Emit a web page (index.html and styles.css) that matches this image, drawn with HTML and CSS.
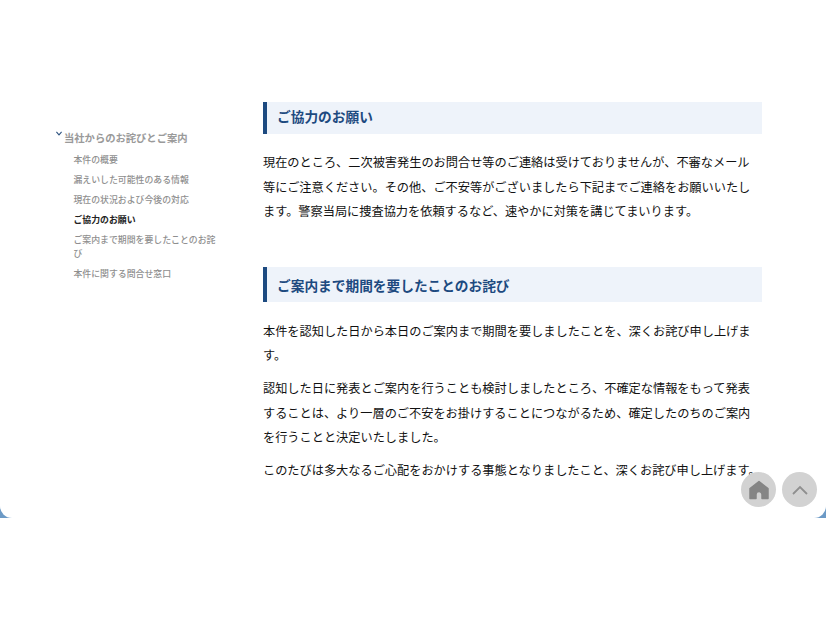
FILE: index.html
```html
<!DOCTYPE html>
<html lang="ja">
<head>
    <meta charset="UTF-8">
    <meta name="viewport" content="width=device-width, initial-scale=1.0">
    <title>当社からのお詫びとご案内</title>
    <link rel="stylesheet" href="styles.css">
</head>
<body>
    <div class="frame">
        <div class="sheet">
            <nav class="side">
                <div class="side-title">
                    <svg class="chevron" viewBox="0 0 6 5" width="6" height="5"><path d="M.4 .8L3 3.800 5.600 .8" fill="none" stroke="#2f5480" stroke-width="1.100"/></svg>
                    <span>当社からのお詫びとご案内</span>
                </div>
                <ul class="side-list">
                    <li>本件の概要</li>
                    <li>漏えいした可能性のある情報</li>
                    <li>現在の状況および今後の対応</li>
                    <li class="current">ご協力のお願い</li>
                    <li>ご案内まで期間を要したことのお詫び</li>
                    <li>本件に関する問合せ窓口</li>
                </ul>
            </nav>
            <main class="content">
                <section class="block">
                    <h2 class="block-title">ご協力のお願い</h2>
                    <p>現在のところ、二次被害発生のお問合せ等のご連絡は受けておりませんが、不審なメール等にご注意ください。その他、ご不安等がございましたら下記までご連絡をお願いいたします。警察当局に捜査協力を依頼するなど、速やかに対策を講じてまいります。</p>
                </section>
                <section class="block">
                    <h2 class="block-title tall">ご案内まで期間を要したことのお詫び</h2>
                    <p>本件を認知した日から本日のご案内まで期間を要しましたことを、深くお詫び申し上げます。</p>
                    <p>認知した日に発表とご案内を行うことも検討しましたところ、不確定な情報をもって発表することは、より一層のご不安をお掛けすることにつながるため、確定したのちのご案内を行うことと決定いたしました。</p>
                    <p class="one-line">このたびは多大なるご心配をおかけする事態となりましたこと、深くお詫び申し上げます。</p>
                </section>
            </main>
            <div class="float-btns">
                <a class="round-btn" href="#">
                    <svg viewBox="0 0 22 22" width="22" height="22"><path d="M11 2.500L20 9.500V19.500H14V15.500a3 3 0 0 0-6 0V19.500H2V9.500Z" fill="#858585" stroke="#858585" stroke-width="1.500" stroke-linejoin="round"/></svg>
                </a>
                <a class="round-btn" href="#">
                    <svg viewBox="0 0 20 12" width="20" height="12"><path d="M3 10L10 3l7 7" fill="none" stroke="#8f8f8f" stroke-width="1.800"/></svg>
                </a>
            </div>
        </div>
    </div>
</body>
</html>
```

FILE: styles.css
```css
* {
    box-sizing: border-box;
}
html, body {
    margin: 0;
    padding: 0;
    height: 100%;
    overflow: hidden;
}
body {
    background-color: #fff;
    color: #111;
    font-family: "Noto Sans CJK JP", "Noto Sans", sans-serif;
}
.frame {
    height: 518px;
    background-color: #6c9ac6;
}
.sheet {
    position: relative;
    display: flex;
    height: 518px;
    padding: 102px 64px 0 54px;
    background-color: #fff;
    border-radius: 0 0 12px 12px;
}
.side {
    flex: none;
    width: 209px;
    padding-top: 28px;
}
.side-title {
    display: flex;
    align-items: flex-start;
    gap: 2px;
    color: #9a9a9a;
    font-size: 10.3px;
    font-weight: 700;
    line-height: 16px;
}
.chevron {
    margin: 1px 0 0 2px;
}
.side-list {
    list-style: none;
    margin: 7px 0 0;
    padding: 0 0 0 19.5px;
    width: 163px;
    color: #8f8f8f;
    font-size: 8.9px;
    font-weight: 500;
    line-height: 14px;
}
.side-list li {
    margin-bottom: 6px;
}
.side-list .current {
    color: #222;
    font-weight: 700;
}
.content {
    flex: 1;
    min-width: 0;
}
.block {
    margin-bottom: 43px;
}
.block-title {
    margin: 0 0 16px;
    padding: 0 10px;
    height: 32px;
    border-left: 4px solid #1d4a80;
    background-color: #eef3fa;
    color: #1d4a80;
    font-size: 13.7px;
    font-weight: 700;
    line-height: 29px;
}
.block-title.tall {
    margin-bottom: 17px;
    height: 35px;
    line-height: 37px;
}
.block p {
    margin: 0 0 8.7px;
    padding-right: 4px;
    font-size: 12.2px;
    line-height: 24.5px;
}
.block .one-line {
    white-space: nowrap;
}
.float-btns {
    position: absolute;
    top: 472px;
    right: 9px;
    display: flex;
    gap: 6px;
}
.round-btn {
    display: flex;
    align-items: center;
    justify-content: center;
    width: 35px;
    height: 35px;
    border-radius: 50%;
    background-color: #d2d2d2;
}
```
